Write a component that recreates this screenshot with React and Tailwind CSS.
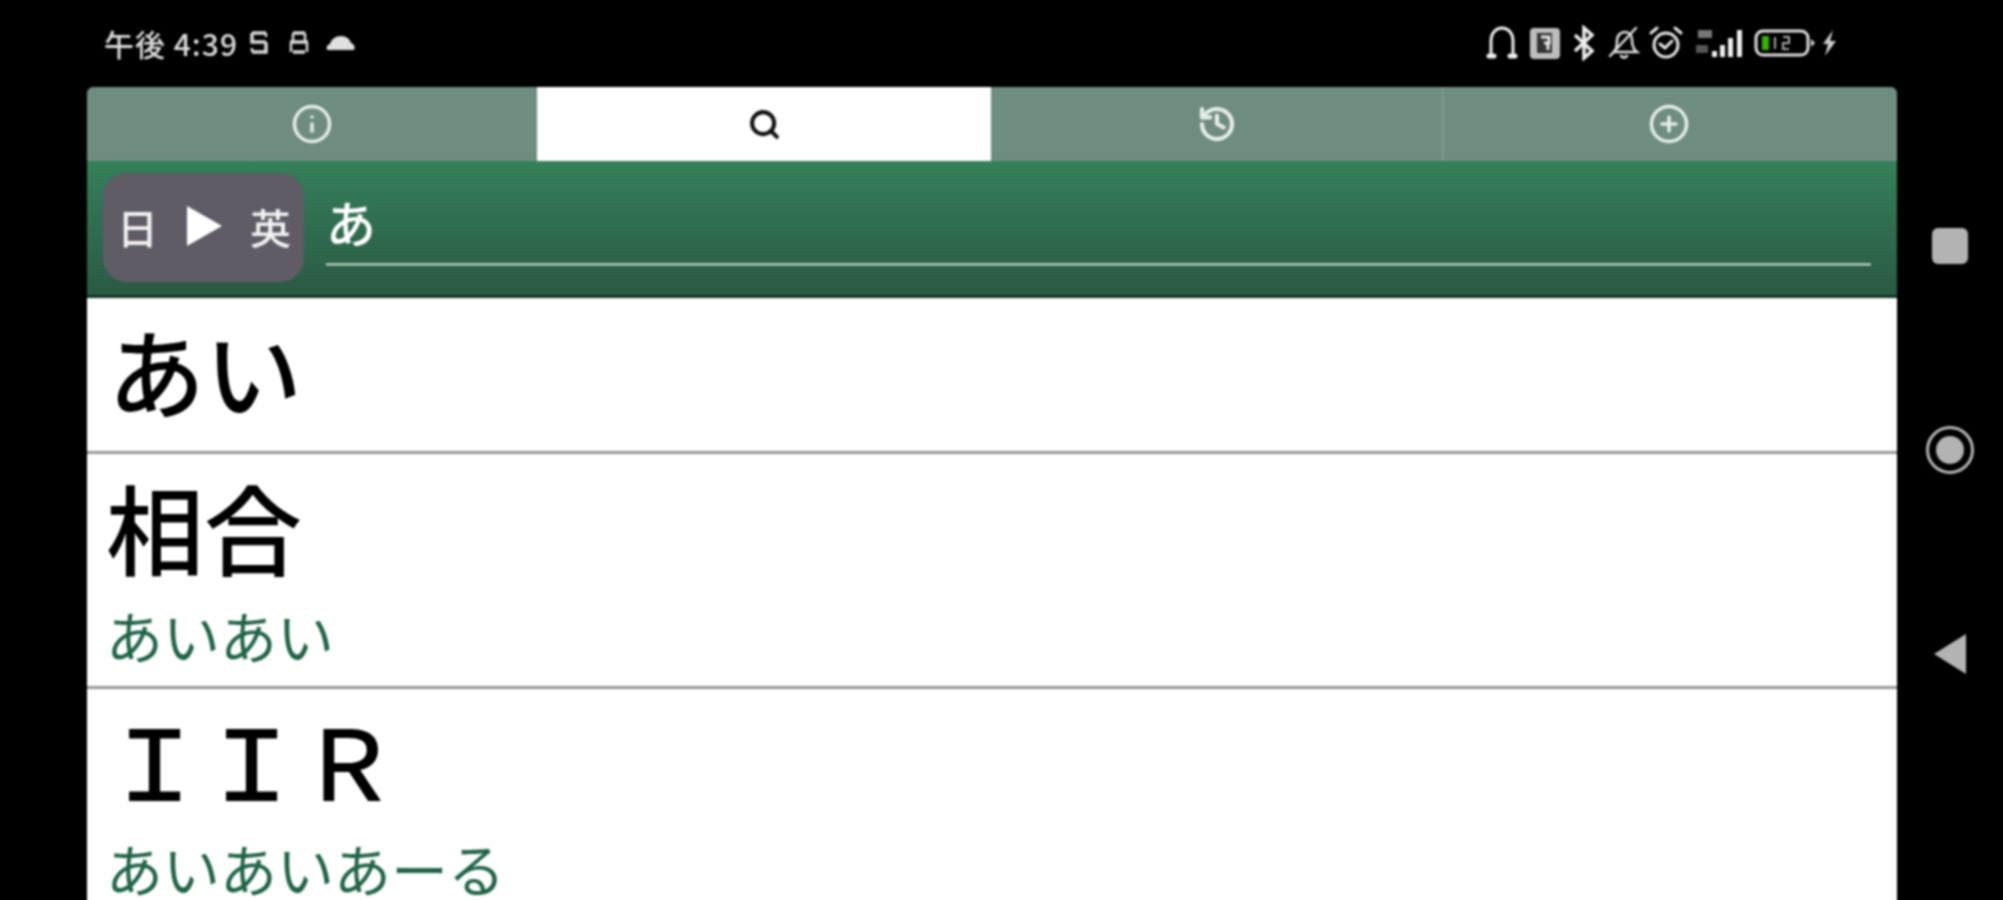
import { Info, Search, History, CirclePlus } from "lucide-react";

const cjk = "font-['Noto_Sans_CJK_JP','Noto_Sans',sans-serif]";

function StatusLeftIcons() {
  return (
    <div className="flex items-center">
      {/* SIMっぽい小さいアイコン2つ */}
      <svg width="24" height="28" viewBox="0 0 24 28" className="ml-[9px]" fill="none" stroke="#d8d8d8" strokeWidth="3.5">
        <path d="M5 4h14M5 4v9h14M19 13v10H5" />
        <path d="M19 4v4M5 19v4" strokeWidth="2.5" />
      </svg>
      <svg width="24" height="28" viewBox="0 0 24 28" className="ml-[16px]" fill="none" stroke="#d8d8d8" strokeWidth="3.5">
        <path d="M6 4h12M3 13h18M6 23h12" />
        <path d="M6 4v9M18 4v9M4 13v10M20 13v10" strokeWidth="2.5" />
      </svg>
      <svg width="30" height="18" viewBox="0 0 30 18" className="ml-[15px]" fill="#e0e0e0">
        <path d="M2 16c-2 0-2-5 2-6 1-5 6-8 11-8s9 3 10 7c4 1 5 7 2 7z" />
      </svg>
    </div>
  );
}

function StatusRightIcons() {
  return (
    <div className="flex items-center">
      {/* ヘッドセット */}
      <svg width="32" height="36" viewBox="0 0 32 36" fill="none" stroke="#eee" strokeWidth="3" strokeLinecap="round">
        <path d="M5 28V16C5 8 10 3 16 3s11 5 11 13v12" />
        <path d="M3 31h5M24 31h5" strokeWidth="5" />
      </svg>
      <svg width="32" height="34" viewBox="0 0 32 34" className="ml-[11px]">
        <rect x="1" y="2" width="30" height="31" rx="4" fill="#bdbdbd" />
        <path d="M8 7h15v20H8z" fill="#333" />
        <path d="M12 11h8v6h-5M19 17v7" fill="none" stroke="#e8e8e8" strokeWidth="3" />
      </svg>
      <svg width="24" height="36" viewBox="0 0 24 36" className="ml-[11px]" fill="none" stroke="#eee" strokeWidth="3.5">
        <path d="M3 10l17 16-8 7V3l8 7L3 26" />
      </svg>
      <svg width="32" height="36" viewBox="0 0 32 36" className="ml-[12px]" fill="none" stroke="#ddd" strokeWidth="2.5" strokeLinecap="round">
        <path d="M6 27c3-3 3-7 3-11 0-6 4-9 8-9s7 3 7 8c0 5 1 9 5 12z" />
        <path d="M13 31c2 2 4 2 6 0M2 31L28 3" />
      </svg>
      <svg width="36" height="36" viewBox="0 0 36 36" className="ml-[8px]" fill="none" stroke="#e4e4e4" strokeWidth="3" strokeLinecap="round">
        <circle cx="18" cy="20" r="12" />
        <path d="M3 8l6-5M33 8l-6-5M12 19l5 4 7-7" />
      </svg>
      <svg width="50" height="32" viewBox="0 0 50 32" className="ml-[11px]">
        <path d="M3 3h14v8H3z" fill="#777" />
        <path d="M1 18h12v8H1z" fill="#555" />
        <path d="M17 24h5v6h-5zM25 18h5v12h-5zM33 11h5v19h-5zM42 3h5v27h-5z" fill="#eee" />
      </svg>
      <svg width="62" height="30" viewBox="0 0 62 30" className="ml-[9px]">
        <rect x="2" y="3" width="52" height="24" rx="7" fill="none" stroke="#ddd" strokeWidth="3" />
        <path d="M57 11l4 4-4 4z" fill="#ddd" />
        <rect x="8" y="8" width="7" height="14" fill="#38b000" />
        <path d="M21 9v12M29 9h6v6h-6v6h6" fill="none" stroke="#aaa" strokeWidth="2" />
      </svg>
      <svg width="16" height="26" viewBox="0 0 16 26" className="ml-[5px]" fill="#ccc">
        <path d="M12 0L2 14h5l-3 12 11-15H9z" />
      </svg>
    </div>
  );
}

function Tab({ active, children, last }) {
  return (
    <div
      className={
        "flex items-center justify-center " +
        (active ? "bg-white text-[#111]" : "text-[#e6ede9]") +
        (last ? " border-l-2 border-[#7f9a8d] pr-[3px]" : "")
      }
    >
      {children}
    </div>
  );
}

function Row({ word, reading, wordClass, className }) {
  return (
    <div className={"border-b-[3px] border-[#979797] bg-white pl-[19px] " + className}>
      <div className={"font-medium leading-none text-black " + wordClass}>{word}</div>
      {reading ? (
        <div className="mt-[8px] text-[57px] leading-[80px] text-[#1f6446]">{reading}</div>
      ) : null}
    </div>
  );
}

export default function App() {
  return (
    <div className="h-[900px] w-[2003px] overflow-hidden bg-black">
      {/* 下端のにじみを隠すため少し高くしてある */}
      <div className={"flex h-[912px] w-[2003px] overflow-hidden bg-black blur-[0.8px] " + cjk}>
        <div className="w-[87px] shrink-0" />

        {/* 画面本体 */}
        <div className="flex w-[1810px] shrink-0 flex-col">
          <div className="flex h-[87px] shrink-0 items-center justify-between pb-[2px] pl-[17px] pr-[60px]">
            <div className="flex items-center text-[30px] font-medium leading-none tracking-[1px] text-[#dcdcdc]">
              <span>午後 4:39</span>
              <StatusLeftIcons />
            </div>
            <StatusRightIcons />
          </div>

          <div className="grid h-[74px] shrink-0 grid-cols-[450px_454px_451px_455px] overflow-hidden rounded-t-[6px] bg-[#6f8d7f]">
            <Tab><Info size={42} strokeWidth={2} /></Tab>
            <Tab active><Search size={33} strokeWidth={3} /></Tab>
            <Tab><History size={40} strokeWidth={2.5} /></Tab>
            <Tab last><CirclePlus size={42} strokeWidth={2} /></Tab>
          </div>

          {/* 検索バー */}
          <div className="flex h-[137px] shrink-0 items-start border-b-[3px] border-[#123024] bg-gradient-to-b from-[#358059] to-[#2a5a45] pl-[16px] pr-[26px] pt-[12px]">
            <div className="flex h-[109px] w-[201px] shrink-0 items-center justify-between rounded-[24px] bg-[#5f5c66] pb-[3px] pl-[14px] pr-[13px] text-[41px] font-medium leading-none text-[#f2f2f2]">
              <span>日</span>
              <svg width="36" height="40" viewBox="0 0 36 40" fill="#fff">
                <path d="M1 0l35 20L1 40z" />
              </svg>
              <span>英</span>
            </div>
            <div className="ml-[22px] flex-1">
              <div className="h-[93px] border-b-[3px] border-[#9dbfae] pt-[16px] text-[50px] font-medium leading-[64px] text-white shadow-[0_1px_0_#1d4a36]">
                あ
              </div>
            </div>
          </div>

          <div className="flex-1 overflow-hidden bg-white">
            <Row word="あい" wordClass="h-[153px] pl-[2px] pt-[22px] text-[97px]" />
            <Row word="相合" reading="あいあい" className="pb-[12px]" wordClass="h-[132px] pt-[22px] text-[98px]" />
            <Row word="ＩＩＲ" reading="あいあいあーる" className="pb-[20px]" wordClass="h-[130px] pt-[21px] text-[97px]" />
          </div>
        </div>

        {/* ナビゲーションバー */}
        <div className="flex flex-1 flex-col items-center pt-[228px]">
          <div className="h-[36px] w-[36px] rounded-[6px] bg-[#b3b3b3]" />
          <div className="mt-[162px] flex h-[48px] w-[48px] items-center justify-center rounded-full border-[3px] border-[#b3b3b3]">
            <div className="h-[28px] w-[28px] rounded-full bg-[#b3b3b3]" />
          </div>
          <svg width="32" height="40" viewBox="0 0 32 40" className="mt-[160px]" fill="#b3b3b3">
            <path d="M32 0v40L0 20z" />
          </svg>
        </div>
      </div>
    </div>
  );
}
